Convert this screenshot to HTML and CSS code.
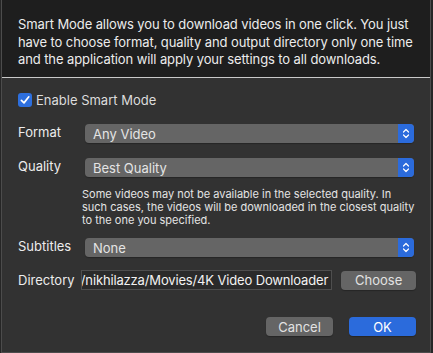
FILE: index.html
```html
<!DOCTYPE html>
<html>
<head>
<meta charset="utf-8">
<link rel="stylesheet" href="styles.css">
</head>
<body>
<div class="window">
  <div class="header">
    <p class="intro">Smart Mode allows you to download videos in one click. You just have to choose format, quality and output directory only one time and the application will apply your settings to all downloads.</p>
  </div>
  <div class="content">
    <label class="check-row">
      <span class="checkbox">
        <svg width="14" height="14" viewBox="0 0 14 14"><path d="M3.4 7.3 L6 9.9 L10.8 3.8" fill="none" stroke="#fff" stroke-width="1.7" stroke-linecap="round" stroke-linejoin="round"/></svg>
      </span>
      <span class="check-label">Enable Smart Mode</span>
    </label>

    <div class="row row-format">
      <span class="label">Format</span>
      <div class="popup">
        <span class="popup-text">Any Video</span>
        <span class="stepper"><svg width="16" height="19" viewBox="0 0 16 19"><path d="M5.5 8 L8 5.5 L10.5 8 M5.5 11 L8 13.5 L10.5 11" fill="none" stroke="#fff" stroke-width="1.2" stroke-linecap="round" stroke-linejoin="round"/></svg></span>
      </div>
    </div>

    <div class="row row-quality">
      <span class="label">Quality</span>
      <div class="popup">
        <span class="popup-text">Best Quality</span>
        <span class="stepper"><svg width="16" height="19" viewBox="0 0 16 19"><path d="M5.5 8 L8 5.5 L10.5 8 M5.5 11 L8 13.5 L10.5 11" fill="none" stroke="#fff" stroke-width="1.2" stroke-linecap="round" stroke-linejoin="round"/></svg></span>
      </div>
    </div>
    <p class="note">Some videos may not be available in the selected quality. In such cases, the videos will be downloaded in the closest quality to the one you specified.</p>

    <div class="row row-subtitles">
      <span class="label">Subtitles</span>
      <div class="popup">
        <span class="popup-text">None</span>
        <span class="stepper"><svg width="16" height="19" viewBox="0 0 16 19"><path d="M5.5 8 L8 5.5 L10.5 8 M5.5 11 L8 13.5 L10.5 11" fill="none" stroke="#fff" stroke-width="1.2" stroke-linecap="round" stroke-linejoin="round"/></svg></span>
      </div>
    </div>

    <div class="row row-directory">
      <span class="label label-dir">Directory</span>
      <div class="field"><span class="field-text">/Users/nikhilazza/Movies/4K Video Downloader</span></div>
      <button class="btn btn-choose">Choose</button>
    </div>

    <div class="actions">
      <button class="btn btn-cancel">Cancel</button>
      <button class="btn btn-ok">OK</button>
    </div>
  </div>
</div>
</body>
</html>
```
FILE: styles.css
```css
html, body {
  margin: 0;
  padding: 0;
  background: #262626;
}
body {
  width: 433px;
  height: 353px;
  overflow: hidden;
  font-family: "Inter", "Liberation Sans", sans-serif;
  color: #e8e8e8;
  -webkit-font-smoothing: antialiased;
}
.window {
  margin-left: 1px;
  width: 428px;
  height: 352px;
  border-left: 1px solid #4c4c4c;
  border-right: 1px solid #4c4c4c;
  border-bottom: 1px solid #4c4c4c;
  background: #323232;
  display: flex;
  flex-direction: column;
}
.header {
  background: #1e1e1e;
  height: 78px;
  box-sizing: border-box;
  padding: 16px 2px 0 16px;
  border-bottom: 1px solid #c9c9c9;
}
.intro {
  margin: 0;
  font-size: 13px;
  line-height: 17.5px;
  letter-spacing: -0.1px;
  color: #ececec;
}
.content {
  padding: 0 14px 0 16px;
  display: flex;
  flex-direction: column;
}
.check-row {
  margin-top: 15px;
  height: 14px;
  display: flex;
  align-items: center;
  gap: 4px;
}
.checkbox {
  width: 14px;
  height: 14px;
  border-radius: 3px;
  background: #2d6fde;
  display: flex;
}
.check-label {
  font-size: 13px;
  color: #dcdcdc;
}
.row {
  display: flex;
  align-items: center;
}
.row-format { margin-top: 17px; }
.row-quality { margin-top: 15px; }
.row-subtitles { margin-top: 11px; }
.row-directory { margin-top: 13px; }
.label {
  width: 67px;
  flex: none;
  font-size: 13px;
  color: #ececec;
  position: relative;
  top: -2px;
}
.label-dir {
  width: 63px;
  top: 0;
}
.popup {
  width: 329px;
  height: 19px;
  border-radius: 4px;
  background: #656565;
  display: flex;
  align-items: center;
  overflow: hidden;
  box-shadow: 0 1px 1px rgba(0,0,0,0.25);
}
.popup-text {
  flex: 1;
  padding-left: 8px;
  font-size: 13px;
  color: #e4e4e4;
}
.stepper {
  width: 16px;
  height: 19px;
  background: #2b6bdc;
  display: flex;
}
.note {
  margin: 11px 0 0 64px;
  font-size: 11px;
  line-height: 13px;
  color: #e4e4e4;
}
.field {
  width: 250px;
  height: 18px;
  border: 1px solid #4e4e4e;
  background: #2a2a2a;
  display: flex;
  justify-content: flex-end;
  align-items: center;
  overflow: hidden;
  white-space: nowrap;
}
.field-text {
  font-size: 13px;
  letter-spacing: -0.15px;
  color: #f2f2f2;
  padding-right: 3px;
}
.btn {
  font-family: inherit;
  font-size: 13px;
  border: none;
  border-radius: 4px;
  height: 19px;
  padding: 0;
  color: #e2e2e2;
  background: #656565;
  box-shadow: 0 1px 1px rgba(0,0,0,0.25);
}
.btn-choose {
  width: 75px;
  margin-left: 9px;
}
.actions {
  margin-top: 27px;
  display: flex;
  justify-content: flex-end;
  gap: 16px;
}
.btn-cancel { width: 67px; }
.btn-ok {
  width: 67px;
  background: #2b6bdc;
  color: #fff;
}
```
